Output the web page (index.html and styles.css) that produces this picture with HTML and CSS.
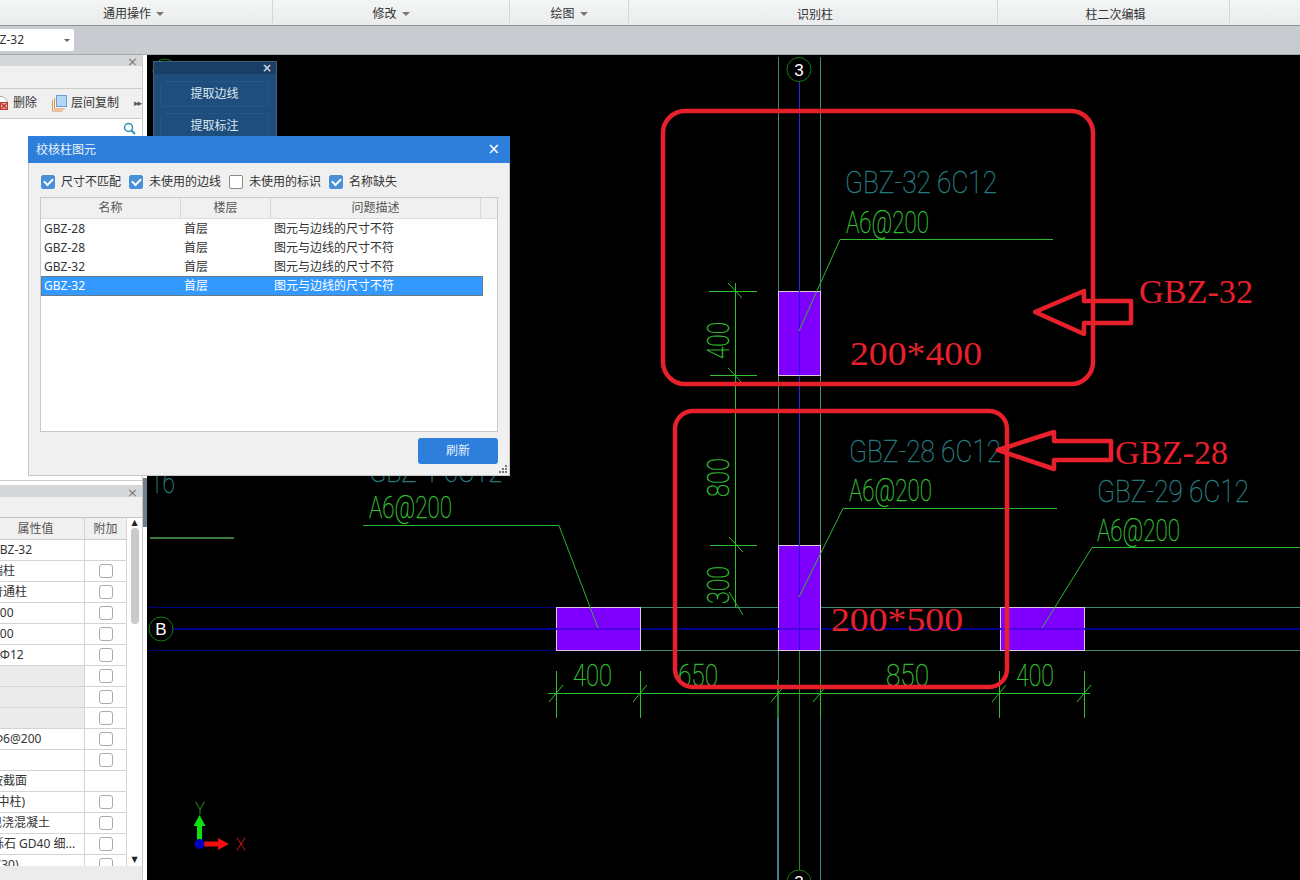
FILE: index.html
```html
<!DOCTYPE html>
<html lang="zh-CN">
<head>
<meta charset="utf-8">
<title>校核柱图元</title>
<link rel="stylesheet" href="styles.css">
</head>
<body>
<div class="app">
  <header class="menubar">
    <div class="menu m1"><span>通用操作</span><i class="caret"></i></div>
    <div class="menu m2"><span>修改</span><i class="caret"></i></div>
    <div class="menu m3"><span>绘图</span><i class="caret"></i></div>
    <div class="menu m4 low"><span>识别柱</span></div>
    <div class="menu m5 low"><span>柱二次编辑</span></div>
    <div class="menu m6"></div>
  </header>
  <div class="toolbar">
    <div class="select"><span class="select-text">GBZ-32</span><i class="caret dark"></i></div>
  </div>
  <main class="main">
    <aside class="side">
      <div class="panels">
        <section class="panel-top">
          <div class="panel-head"><span class="x">×</span></div>
          <div class="panel-row"></div>
          <div class="panel-tools">
            <svg class="ico-del" width="12" height="16" viewBox="0 0 12 16"><path d="M-3 1.500h6l4 4v8h-10z" fill="#fff" stroke="#aaa"/><rect x=".5" y="7.500" width="7" height="7" fill="#e9b7b0" stroke="#c0392b"/><path d="M1.500 8.500l5 5M6.500 8.500l-5 5" stroke="#b02a20" stroke-width="1.200"/></svg>
            <span class="tool-del">删除</span>
            <svg class="ico-copy" width="15" height="17" viewBox="0 0 15 17"><path d="M.5 5v11h10" fill="none" stroke="#e2944a"/><path d="M2.500 3v11h10" fill="none" stroke="#e2944a"/><rect x="4.500" y=".5" width="10" height="11" fill="#b5d6fb" stroke="#6b9fd8"/></svg>
            <span class="tool-copy">层间复制</span>
            <span class="more">▸▸</span>
          </div>
          <div class="search">
            <svg width="13" height="13" viewBox="0 0 13 13"><circle cx="5.500" cy="5.500" r="4" fill="none" stroke="#2f8fb5" stroke-width="1.500"/><path d="M8.500 8.500l3.500 3.500" stroke="#2f8fb5" stroke-width="2"/></svg>
          </div>
          <div class="list"></div>
        </section>
        <div class="panel-gap"></div>
        <section class="panel-bottom">
          <div class="panel-head short"><span class="x">×</span></div>
          <div class="panel-row tall"></div>
          <div class="prop">
            <div class="prop-table">
              <div class="pr head"><div class="c1">属性值</div><div class="c2">附加</div></div>
              <div class="pr"><div class="c1 ind-9">GBZ-32</div><div class="c2"></div></div>
              <div class="pr"><div class="c1 ind-9">端柱</div><div class="c2"><i class="box"></i></div></div>
              <div class="pr"><div class="c1 ind-9">普通柱</div><div class="c2"><i class="box"></i></div></div>
              <div class="pr"><div class="c1 ind-7">200</div><div class="c2"><i class="box"></i></div></div>
              <div class="pr"><div class="c1 ind-7">200</div><div class="c2"><i class="box"></i></div></div>
              <div class="pr"><div class="c1 ind-7">6Φ12</div><div class="c2"><i class="box"></i></div></div>
              <div class="pr"><div class="c1 off"></div><div class="c2"><i class="box"></i></div></div>
              <div class="pr"><div class="c1 off"></div><div class="c2"><i class="box"></i></div></div>
              <div class="pr"><div class="c1 off"></div><div class="c2"><i class="box"></i></div></div>
              <div class="pr"><div class="c1 ind-7">Φ6@200</div><div class="c2"><i class="box"></i></div></div>
              <div class="pr"><div class="c1"></div><div class="c2"><i class="box"></i></div></div>
              <div class="pr"><div class="c1 ind-9">按截面</div><div class="c2"></div></div>
              <div class="pr"><div class="c1 ind-6">(中柱)</div><div class="c2"><i class="box"></i></div></div>
              <div class="pr"><div class="c1 ind-10">现浇混凝土</div><div class="c2"><i class="box"></i></div></div>
              <div class="pr"><div class="c1 ind-8">砾石 GD40 细...</div><div class="c2"><i class="box"></i></div></div>
              <div class="pr"><div class="c1 ind-10">(C30)</div><div class="c2"><i class="box"></i></div></div>
            </div>
            <div class="vscroll">
              <span class="arrow">▲</span>
              <div class="thumb"></div>
              <span class="arrow down">▼</span>
            </div>
          </div>
          <div class="panel-foot"></div>
        </section>
      </div>
      <div class="strip"><div class="strip-dark"></div></div>
    </aside>
    <div class="canvas">
      <svg class="cad" viewBox="147 55 1153 825" width="1153" height="825">
        <!-- axes -->
        <g fill="none" class="crisp">
          <path class="axis-thin" d="M799 80V630"/>
          <path class="axis-b" d="M148 629H1300"/>
          <path class="dk" d="M148 607H556M148 650H556"/>
          <path class="teal" d="M640 607H778M820 607H1000M1085 607H1300M640 650H778M820 650H1000M1085 650H1300"/>
          <path class="teal" d="M778 57V680M820 57V680"/>
          <path class="deep" d="M778 680V718"/>
          <path class="steel" d="M778 718V880"/>
          <path class="steel-thin" d="M820 718V880"/>
          <path class="green" d="M799 630V870"/>
          <path class="dim-green-thick" d="M150 538H234"/>
        </g>
        <!-- bubbles -->
        <g class="bubble">
          <circle cx="799" cy="69.500" r="12"/>
          <circle cx="161" cy="629" r="12"/>
          <circle cx="165" cy="71" r="12"/>
          <circle cx="799" cy="882" r="12"/>
        </g>
        <text class="bub-t" x="799" y="76">3</text>
        <text class="bub-t" x="161" y="635">B</text>
        <text class="bub-t" x="799" y="888">3</text>
        <!-- columns -->
        <g class="col crisp">
          <rect x="556" y="607" width="84" height="43"/>
          <rect x="778" y="545" width="42" height="105"/>
          <rect x="1000" y="607" width="84" height="43"/>
          <rect x="778" y="291" width="42" height="84"/>
        </g>
        <path class="blue-over crisp" d="M799 291V375M799 545V650"/>
        <path class="blue-band crisp" d="M556 629H640M778 629H820M1000 629H1085"/>
        <!-- leaders -->
        <g fill="none">
          <path class="lead" d="M363 525.500H559L598 628"/>
          <path class="lead" d="M799 331L840 239.500H1053"/>
          <path class="lead" d="M799 597L843 508.500H1057"/>
          <path class="lead" d="M1042 628L1092 547.500H1300"/>
        </g>
        <!-- dimensions -->
        <g class="dim" fill="none">
          <path class="crisp" d="M735 283V607"/>
          <path class="crisp" d="M709 291H757M710 375H757M710 545H757"/>
          <path d="M728 283L742 298M728 368L742 383M729 537L743 552M729 592L743 615"/>
          <path class="crisp" d="M548 693H1090"/>
          <path class="crisp" d="M556 671V718M640 671V718M820 680V718M999 671V718M1084 671V718"/>
          <path d="M549 702L563 685M633 702L647 685M771 702L785 685M813 702L827 685M992 702L1006 685M1077 702L1091 685"/>
        </g>
        <!-- cad text -->
        <text class="cad-t t-teal" x="845" y="193" textLength="152" lengthAdjust="spacingAndGlyphs">GBZ-32 6C12</text>
        <text class="cad-t t-green" x="846" y="233" textLength="83" lengthAdjust="spacingAndGlyphs">A6@200</text>
        <text class="cad-t t-teal" x="849" y="462" textLength="152" lengthAdjust="spacingAndGlyphs">GBZ-28 6C12</text>
        <text class="cad-t t-green" x="849" y="501" textLength="83" lengthAdjust="spacingAndGlyphs">A6@200</text>
        <text class="cad-t t-teal" x="1097" y="502" textLength="152" lengthAdjust="spacingAndGlyphs">GBZ-29 6C12</text>
        <text class="cad-t t-green" x="1097" y="541" textLength="83" lengthAdjust="spacingAndGlyphs">A6@200</text>
        <text class="cad-t t-teal" x="369" y="482" textLength="133" lengthAdjust="spacingAndGlyphs">GBZ-1 6C12</text>
        <text class="cad-t t-green" x="369" y="518" textLength="83" lengthAdjust="spacingAndGlyphs">A6@200</text>
        <text class="cad-t t-teal" x="150" y="493" textLength="25" lengthAdjust="spacingAndGlyphs">16</text>
        <text class="cad-t t-green" x="573" y="686" textLength="39" lengthAdjust="spacingAndGlyphs">400</text>
        <text class="cad-t t-green" x="678" y="686" textLength="40" lengthAdjust="spacingAndGlyphs">650</text>
        <text class="cad-t t-green" x="886" y="686" textLength="43" lengthAdjust="spacingAndGlyphs">850</text>
        <text class="cad-t t-green" x="1016" y="686" textLength="38" lengthAdjust="spacingAndGlyphs">400</text>
        <text class="cad-t t-green" transform="translate(729 359) rotate(-90)" textLength="37" lengthAdjust="spacingAndGlyphs">400</text>
        <text class="cad-t t-green" transform="translate(729 497) rotate(-90)" textLength="39" lengthAdjust="spacingAndGlyphs">800</text>
        <text class="cad-t t-green" transform="translate(729 604) rotate(-90)" textLength="38" lengthAdjust="spacingAndGlyphs">300</text>
        <!-- red annotations -->
        <g class="red" fill="none">
          <rect x="663" y="111" width="430" height="273" rx="22"/>
          <rect x="675" y="411" width="332" height="276" rx="18"/>
          <path d="M1035 312L1084 291V301H1131V323H1084V334Z"/>
          <path d="M998 450L1054 432V441H1111V460H1054V469Z"/>
        </g>
        <text class="red-t" x="1139" y="303" textLength="114" lengthAdjust="spacingAndGlyphs">GBZ-32</text>
        <text class="red-t" x="850" y="365" textLength="132" lengthAdjust="spacingAndGlyphs">200*400</text>
        <text class="red-t" x="1115" y="464" textLength="113" lengthAdjust="spacingAndGlyphs">GBZ-28</text>
        <text class="red-t" x="831" y="631" textLength="132" lengthAdjust="spacingAndGlyphs">200*500</text>
        <!-- ucs -->
        <path class="ucs-g" d="M197 840V826H193.500L199.500 815L205.500 826H202V840Z"/>
        <path class="ucs-r" d="M204 841.500H218V838L229 844L218 850V846.500H204Z"/>
        <circle class="ucs-b" cx="199.500" cy="844" r="5"/>
        <text class="ucs-y" x="200" y="814">Y</text>
        <text class="ucs-x" x="236" y="850">X</text>
      </svg>

      <div class="float-panel">
        <div class="float-head"><span class="x light">×</span></div>
        <div class="float-body">
          <div class="float-btn">提取边线</div>
          <div class="float-btn">提取标注</div>
        </div>
      </div>
    </div>
  </main>

  <div class="dialog">
    <div class="dlg-title"><span>校核柱图元</span><span class="dlg-close">×</span></div>
    <div class="dlg-body">
      <div class="checks">
        <label class="chk"><i class="cb on"></i>尺寸不匹配</label>
        <label class="chk"><i class="cb on"></i>未使用的边线</label>
        <label class="chk"><i class="cb"></i>未使用的标识</label>
        <label class="chk"><i class="cb on"></i>名称缺失</label>
      </div>
      <div class="grid">
        <div class="grow ghead"><div class="g1">名称</div><div class="g2">楼层</div><div class="g3">问题描述</div></div>
        <div class="grow"><div class="g1">GBZ-28</div><div class="g2">首层</div><div class="g3">图元与边线的尺寸不符</div></div>
        <div class="grow"><div class="g1">GBZ-28</div><div class="g2">首层</div><div class="g3">图元与边线的尺寸不符</div></div>
        <div class="grow"><div class="g1">GBZ-32</div><div class="g2">首层</div><div class="g3">图元与边线的尺寸不符</div></div>
        <div class="grow sel"><div class="g1">GBZ-32</div><div class="g2">首层</div><div class="g3">图元与边线的尺寸不符</div></div>
      </div>
      <div class="dlg-foot"><div class="refresh">刷新</div></div>
    </div>
    <svg class="grip" width="9" height="9" viewBox="0 0 9 9"><path d="M6 0h2v2H6zM3 3h2v2H3zM6 3h2v2H6zM0 6h2v2H0zM3 6h2v2H3zM6 6h2v2H6z" fill="#777"/></svg>
  </div>
</div>
</body>
</html>
```
FILE: styles.css
```css
* { box-sizing: border-box; }
html, body { margin: 0; padding: 0; }
body {
  width: 1300px; height: 880px; overflow: hidden; background: #000;
  font: 12px/1 "Noto Sans", "Noto Sans CJK SC", sans-serif; color: #333;
}
.app { width: 1300px; height: 880px; display: flex; flex-direction: column; position: relative; }

/* menu bar */
.menubar {
  height: 26px; flex: none; display: flex;
  background: linear-gradient(#f4f6f6, #e9ebec);
  border-bottom: 1px solid #8f9294;
}
.menu {
  display: flex; align-items: center; justify-content: center; gap: 5px;
  padding-top: 5px; height: 23px; border-right: 1px solid #d4d6d8; color: #333;
}
.menu.low { padding-top: 7px; }
.m1 { width: 273px; padding-right: 5px; }
.m2 { width: 237px; }
.m3 { width: 119px; }
.m4 { width: 369px; padding-left: 4px; }
.m5 { width: 232px; padding-left: 4px; }
.m6 { flex: 1; border-right: 0; }
.caret {
  display: block; width: 0; height: 0;
  border: 4px solid transparent; border-top: 4px solid #777; border-bottom: 0;
}
.caret.dark { border-width: 3px 3px 0; border-top-color: #666; }

/* second bar */
.toolbar {
  height: 29px; flex: none; background: #c8cbcf; border-bottom: 1px solid #a6a8aa;
  padding-top: 3px;
}
.select {
  width: 74px; height: 22px; background: #fff; display: flex; align-items: center;
  justify-content: space-between; padding-right: 4px; overflow: hidden; border-radius: 0 2px 2px 0;
}
.select-text { margin-left: -17px; color: #333; }

/* main */
.main { flex: 1; display: flex; min-height: 0; }
.side { width: 147px; flex: none; display: flex; background: #fff; }
.panels { width: 143px; flex: none; display: flex; flex-direction: column; border-right: 1px solid #c8c8c8; }
.strip { width: 4px; flex: none; padding-top: 423px; background: #fff; }
.strip-dark { height: 49px; background: #6f7f8d; }

.panel-top { height: 425px; flex: none; display: flex; flex-direction: column; background: #fff; }
.panel-gap { height: 5px; flex: none; background: #fff; border-top: 1px solid #ccc; }
.panel-bottom { flex: 1; display: flex; flex-direction: column; min-height: 0; }
.panel-head {
  height: 11px; flex: none; background: #d6d7d9; display: flex; justify-content: flex-end;
  align-items: center; padding: 2px 4px 0 0;
}
.panel-head.short { height: 12px; }
.x { font: 13px/1 "DejaVu Sans", sans-serif; color: #777; }
.panel-row { height: 23px; flex: none; background: #f0f0f0; border-bottom: 1px solid #ccc; }
.panel-row.tall { height: 21px; border-bottom: 1px solid #c4c4c4; }
.panel-tools {
  height: 30px; flex: none; background: #f0f0f0; border-bottom: 1px solid #ccc;
  display: flex; align-items: center; padding-bottom: 1px;
}
.ico-del { margin-left: 0; flex: none; }
.tool-del { margin-left: 1px; }
.ico-copy { margin-left: 15px; flex: none; }
.tool-copy { margin-left: 4px; }
.more { margin-left: 15px; font: 9px/1 "DejaVu Sans", sans-serif; color: #555; letter-spacing: -1px; }
.search {
  height: 18px; flex: none; display: flex; align-items: center; justify-content: flex-end;
  padding-right: 6px; background: #fff;
}
.list { flex: 1; background: #fff; }

.prop { height: 348px; flex: none; display: flex; overflow: hidden; background: #fff; }
.prop-table { width: 127px; flex: none; }
.pr { height: 21px; display: flex; border-bottom: 1px solid #d4d4d4; }
.pr.head { height: 22px; background: #f0f0f0; color: #555; border-bottom-color: #ccc; }
.c1 {
  width: 85px; flex: none; border-right: 1px solid #d4d4d4; overflow: hidden; white-space: nowrap;
  display: block; line-height: 20px;
}
.head .c1 { text-align: center; padding-right: 13px; line-height: 21px; }
.c2 { flex: 1; display: flex; align-items: center; justify-content: center; color: #555; border-right: 1px solid #d4d4d4; }
.off { background: #ebebeb; }
.ind-6 { text-indent: -6px; }
.ind-7 { text-indent: -7px; }
.ind-8 { text-indent: -8px; }
.ind-9 { text-indent: -9px; }
.ind-10 { text-indent: -10px; }
.box { display: block; width: 14px; height: 14px; background: #fff; border: 1px solid #aaa; border-radius: 3px; }
.vscroll {
  flex: 1; display: flex; flex-direction: column; align-items: center; background: #fff;
}
.arrow { font: 8px/10px "DejaVu Sans", sans-serif; color: #222; margin-top: 0; height: 10px; }
.arrow.down { margin-top: auto; margin-bottom: 1px; }
.thumb { width: 8px; height: 96px; margin-top: 0; background: #c9c9c9; border-radius: 4px; }
.panel-foot { flex: 1; background: #ececec; }

/* canvas */
.canvas { flex: 1; background: #000; position: relative; overflow: hidden; min-width: 0; }
.cad { display: block; }
.crisp, .crisp path, .crisp rect { shape-rendering: crispEdges; }
.axis-thin { stroke: #2828e0; stroke-width: 1; }
.axis-b { stroke: #00008c; stroke-width: 2; }
.dk { stroke: #00007c; stroke-width: 1; }
.teal { stroke: #3f8a74; stroke-width: 1; }
.deep { stroke: #1f7f2f; stroke-width: 2; }
.steel { stroke: #3f7f92; stroke-width: 2; }
.steel-thin { stroke: #3f7f92; stroke-width: 1; }
.green { stroke: #1f8f1f; stroke-width: 1; }
.dim-green-thick { stroke: #3a7a3a; stroke-width: 2; }
.bubble circle { fill: #000; stroke: #157a15; stroke-width: 1; }
.bub-t { fill: #fff; font: 17px "Liberation Sans", sans-serif; text-anchor: middle; }
.col rect { fill: #8000ff; stroke: #e0c8e0; stroke-width: 1; }
.blue-over { stroke: #2a10d8; stroke-width: 1; fill: none; }
.blue-band { stroke: #4a06e0; stroke-width: 2; fill: none; }
.lead { stroke: #2fb52f; stroke-width: 1; }
.dim path { stroke: #2fc02f; stroke-width: 1; }
.cad-t { font: 100 31px Roboto, "Liberation Sans", sans-serif; stroke-width: .35; }
.t-teal { fill: #2a8085; stroke: #2a8085; }
.t-green { fill: #35c535; stroke: #35c535; }
.red rect, .red path { stroke: #e8202c; stroke-width: 4.500; stroke-linejoin: round; }
.red-t { font: 34px "Liberation Serif", serif; fill: #e8202c; }
.ucs-g { fill: #10e010; }
.ucs-r { fill: #f01010; }
.ucs-b { fill: #0000c0; }
.ucs-y { fill: #2fa02f; stroke: #2fa02f; stroke-width: .3; font: 100 16px Roboto, sans-serif; text-anchor: middle; }
.ucs-x { fill: #d02020; stroke: #d02020; stroke-width: .3; font: 100 16px Roboto, sans-serif; }

/* floating panel */
.float-panel {
  position: absolute; left: 6px; top: 6px; width: 124px; height: 90px;
  background: #1e4d7b; border: 1px solid #41607f;
}
.float-head {
  height: 12px; background: #1b3e64; display: flex; justify-content: flex-end; align-items: center; padding-right: 4px;
}
.x.light { color: #c6d4e2; font-weight: bold; font-size: 12px; }
.float-body { padding: 7px 7px 0 6px; display: flex; flex-direction: column; gap: 6px; }
.float-btn {
  height: 26px; background: #1e4e7e; border: 1px solid #265688; border-radius: 3px;
  display: flex; align-items: center; justify-content: center; color: #dfe8f1;
}

/* dialog */
.dialog {
  position: absolute; left: 28px; top: 136px; width: 482px; height: 340px;
  background: #f0f0f0; border: 1px solid #c8c8c8; border-top: 0; display: flex; flex-direction: column;
}
.dlg-title {
  height: 27px; margin: 0 -1px; flex: none; background: #2e7fdc; color: #e8f1fb;
  display: flex; justify-content: space-between; align-items: center; padding: 0 10px 0 8px;
}
.dlg-close { font: 15px/1 "DejaVu Sans", sans-serif; color: #fff; }
.dlg-body { flex: 1; display: flex; flex-direction: column; padding: 12px 11px 0 11px; }
.checks { display: flex; gap: 8px; height: 22px; flex: none; padding-left: 1px; }
.chk { display: flex; align-items: flex-start; gap: 6px; line-height: 14px; color: #333; }
.cb {
  display: flex; align-items: center; justify-content: center;
  width: 14px; height: 14px; border-radius: 2px; background: #fff; border: 1px solid #888;
}
.cb.on { background: #4a90d9; border-color: #4a90d9; }
.cb.on::after {
  content: ""; display: block; width: 7px; height: 4px; margin-top: -2px;
  border-left: 2px solid #fff; border-bottom: 2px solid #fff; transform: rotate(-45deg);
}
.grid { height: 235px; flex: none; background: #fff; border: 1px solid #c8c8c8; }
.grow { display: flex; height: 19px; align-items: center; width: 442px; color: #333; }
.ghead { height: 21px; width: 100%; background: #f0f0f0; border-bottom: 1px solid #ddd; color: #555; padding-right: 16px; }
.ghead > div { height: 100%; display: flex; align-items: center; justify-content: center; border-right: 1px solid #d8d8d8; padding: 0; }
.g1 { width: 140px; padding-left: 3px; }
.g2 { width: 90px; padding-left: 3px; }
.g3 { flex: 1; padding-left: 3px; }
.sel { height: 20px; background: #3399ff; color: #fff; box-shadow: inset 0 0 0 1px #6a7a88; }
.dlg-foot { display: flex; justify-content: flex-end; padding-top: 6px; }
.refresh {
  width: 80px; height: 26px; background: #2e7fdc; border-radius: 3px; color: #e4effb;
  display: flex; align-items: center; justify-content: center;
}
.grip { position: absolute; right: 1px; bottom: 1px; }
```
